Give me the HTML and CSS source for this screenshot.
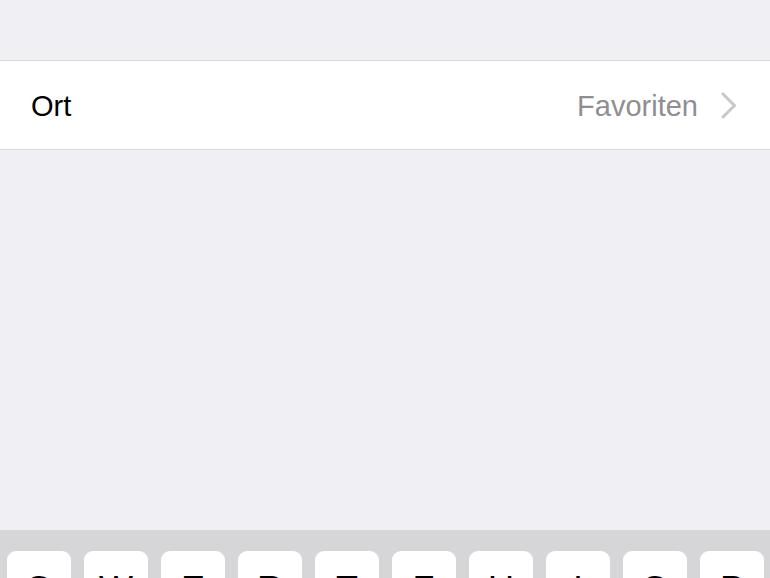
FILE: index.html
```html
<!DOCTYPE html>
<html lang="de">
<head>
<meta charset="utf-8">
<title>Ort</title>
<link rel="stylesheet" href="styles.css">
</head>
<body>
<div class="screen">
  <div class="top-space"></div>
  <div class="cell">
    <span class="cell-label">Ort</span>
    <span class="cell-detail">
      <span class="cell-value">Favoriten</span>
      <svg class="chevron" width="18" height="27" viewBox="0 0 18 27" aria-hidden="true">
        <path d="M3 2 L14.5 13.5 L3 25" fill="none" stroke="#c7c7cc" stroke-width="3" stroke-linecap="round" stroke-linejoin="round"/>
      </svg>
    </span>
  </div>
  <div class="filler"></div>
  <div class="keyboard">
    <div class="key-row">
      <div class="key">Q</div>
      <div class="key">W</div>
      <div class="key">E</div>
      <div class="key">R</div>
      <div class="key">T</div>
      <div class="key">Z</div>
      <div class="key">U</div>
      <div class="key">I</div>
      <div class="key">O</div>
      <div class="key">P</div>
    </div>
  </div>
</div>
</body>
</html>
```

FILE: styles.css
```css
html, body {
  margin: 0;
  padding: 0;
  height: 100%;
  overflow: hidden;
}
body {
  background: #efeff4;
  font-family: "Liberation Sans", Arial, sans-serif;
}
.screen {
  display: flex;
  flex-direction: column;
  height: 578px;
  width: 770px;
}
.top-space {
  height: 60px;
  flex: none;
}
.cell {
  flex: none;
  height: 88px;
  background: #ffffff;
  border-top: 1px solid #d9d9dd;
  border-bottom: 1px solid #d9d9dd;
  display: flex;
  align-items: center;
  justify-content: space-between;
  padding: 0 32px 0 31px;
  font-size: 29px;
}
.cell-label {
  color: #000000;
  padding-top: 3px;
}
.cell-detail {
  display: flex;
  align-items: center;
  gap: 22px;
}
.cell-value {
  color: #8e8e93;
  padding-top: 3px;
}
.chevron {
  display: block;
  margin-top: 1px;
}
.filler {
  flex: none;
  height: 380px;
}
.keyboard {
  flex: 1;
  background: #d6d6d9;
  padding: 21px 6px 0 7px;
}
.key-row {
  display: flex;
  gap: 13px;
}
.key {
  width: 64px;
  height: 80px;
  flex: none;
  background: #ffffff;
  border-radius: 9px;
  text-align: center;
  font-size: 36px;
  line-height: 36px;
  padding-top: 21px;
  box-sizing: border-box;
  color: #000000;
}
```
